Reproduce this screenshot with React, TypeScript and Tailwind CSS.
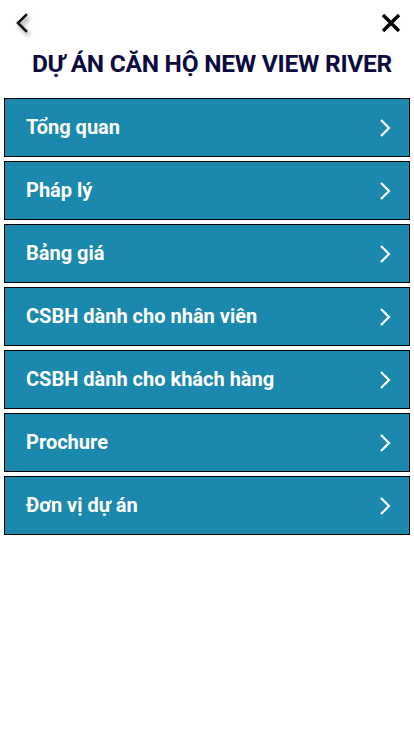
const items = [
  "Tổng quan",
  "Pháp lý",
  "Bảng giá",
  "CSBH dành cho nhân viên",
  "CSBH dành cho khách hàng",
  "Prochure",
  "Đơn vị dự án",
];

export default function App() {
  return (
    <div className="min-h-screen bg-white font-['Roboto',sans-serif]">
      {/* Top bar */}
      <div className="flex items-center justify-between h-[46px] pl-[14px] pr-[12px]">
        <svg width="16" height="22" viewBox="0 0 16 22" className="drop-shadow-[2px_3px_2px_rgba(0,0,0,0.45)]">
          <path d="M12 3 L4 11 L12 19" fill="none" stroke="#111" strokeWidth="2.6" strokeLinecap="square" />
        </svg>
        <svg width="22" height="22" viewBox="0 0 22 22">
          <path d="M3 3 L19 19 M19 3 L3 19" fill="none" stroke="#000" strokeWidth="3.4" />
        </svg>
      </div>

      {/* Title */}
      <h1 className="text-center text-[24.5px] leading-[36px] font-bold text-[#0c0a3e] pl-[10px] tracking-[-0.25px]">
        DỰ ÁN CĂN HỘ NEW VIEW RIVER
      </h1>

      {/* Menu */}
      <div className="flex flex-col gap-[4px] px-[4px] pt-[16px]">
        {items.map((item) => (
          <button
            key={item}
            type="button"
            className="flex items-center justify-between h-[59px] w-full border border-black bg-[#1b88ad] pl-[21px] pr-[18px] text-left"
          >
            <span className="text-white text-[20px] font-bold leading-none pb-[1px]">{item}</span>
            <svg width="12" height="20" viewBox="0 0 12 20">
              <path d="M2 2 L10 10 L2 18" fill="none" stroke="#fff" strokeWidth="2.2" />
            </svg>
          </button>
        ))}
      </div>
    </div>
  );
}
